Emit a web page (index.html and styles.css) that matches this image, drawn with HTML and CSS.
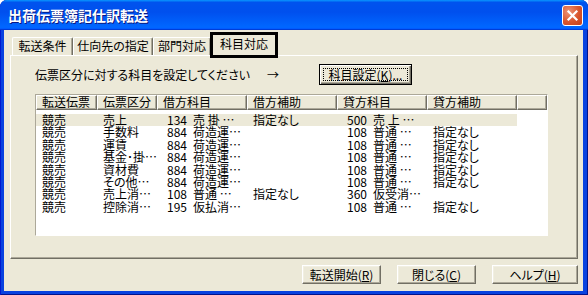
FILE: index.html
```html
<!DOCTYPE html>
<html lang="ja">
<head>
  <meta charset="UTF-8" />
  <title>出荷伝票簿記仕訳転送</title>
  <link rel="stylesheet" href="styles.css">
</head>
<body>
  <!-- Dialog window -->
  <div class="window">
    <div class="titlebar">
      <span class="title">出荷伝票簿記仕訳転送</span>
      <div class="close-btn">
        <svg width="13" height="13" viewBox="0 0 13 13">
          <path d="M2.5 2.5 L10.5 10.5 M10.5 2.5 L2.5 10.5" stroke="#fff" stroke-width="2.2" stroke-linecap="square" fill="none"/>
        </svg>
      </div>
    </div>

    <div class="client">
      <!-- Tabs -->
      <div class="tabs">
        <div class="tab tab-cond">転送条件</div>
        <div class="tab tab-dest">仕向先の指定</div>
        <div class="tab tab-dept">部門対応</div>
        <div class="tab tab-acct active">科目対応</div>
      </div>

      <div class="panel">
        <div class="prompt-row">
          <span class="prompt">伝票区分に対する科目を設定してください</span>
          <span class="arrow">→</span>
          <div class="btn btn-default"><span class="focus-ring">科目設定(<u>K</u>)...</span></div>
        </div>

        <!-- List view -->
        <div class="listview">
          <div class="lv-header">
            <div class="lv-col">転送伝票</div>
            <div class="lv-col">伝票区分</div>
            <div class="lv-col">借方科目</div>
            <div class="lv-col">借方補助</div>
            <div class="lv-col">貸方科目</div>
            <div class="lv-col">貸方補助</div>
            <div class="lv-col lv-filler"></div>
          </div>
          <div class="lv-body">
            <div class="lv-row selected">
              <span>競売</span><span>売上</span>
              <span class="num"><i class="code">134</i>売 掛 …</span><span>指定なし</span>
              <span class="num"><i class="code">500</i>売 上 …</span><span></span>
            </div>
            <div class="lv-row">
              <span>競売</span><span>手数料</span>
              <span class="num"><i class="code">884</i>荷造運…</span><span></span>
              <span class="num"><i class="code">108</i>普通 …</span><span>指定なし</span>
            </div>
            <div class="lv-row">
              <span>競売</span><span>運賃</span>
              <span class="num"><i class="code">884</i>荷造運…</span><span></span>
              <span class="num"><i class="code">108</i>普通 …</span><span>指定なし</span>
            </div>
            <div class="lv-row">
              <span>競売</span><span>基金･掛…</span>
              <span class="num"><i class="code">884</i>荷造運…</span><span></span>
              <span class="num"><i class="code">108</i>普通 …</span><span>指定なし</span>
            </div>
            <div class="lv-row">
              <span>競売</span><span>資材費</span>
              <span class="num"><i class="code">884</i>荷造運…</span><span></span>
              <span class="num"><i class="code">108</i>普通 …</span><span>指定なし</span>
            </div>
            <div class="lv-row">
              <span>競売</span><span>その他…</span>
              <span class="num"><i class="code">884</i>荷造運…</span><span></span>
              <span class="num"><i class="code">108</i>普通 …</span><span>指定なし</span>
            </div>
            <div class="lv-row">
              <span>競売</span><span>売上消…</span>
              <span class="num"><i class="code">108</i>普通 …</span><span>指定なし</span>
              <span class="num"><i class="code">360</i>仮受消…</span><span></span>
            </div>
            <div class="lv-row">
              <span>競売</span><span>控除消…</span>
              <span class="num"><i class="code">195</i>仮払消…</span><span></span>
              <span class="num"><i class="code">108</i>普通 …</span><span>指定なし</span>
            </div>
          </div>
        </div>
      </div>

      <!-- Dialog buttons -->
      <div class="actions">
        <div class="btn btn-start">転送開始(<u>R</u>)</div>
        <div class="btn btn-close">閉じる(<u>C</u>)</div>
        <div class="btn btn-help">ヘルプ(<u>H</u>)</div>
      </div>
    </div>
  </div>
</body>
</html>
```

FILE: styles.css
```css
/* General */
* {
  box-sizing: border-box;
}

body {
  margin: 0;
  font-family: "Noto Sans CJK JP", "Noto Sans", sans-serif;
  font-size: 12px;
  font-feature-settings: "palt";
  color: #000;
  background: #fff;
}

/* Window frame */
.window {
  width: 588px;
  height: 295px;
  display: flex;
  flex-direction: column;
  background: #0842e0;
  border-radius: 7px 7px 0 0;
  box-shadow: inset 1px 0 #0019cf, inset -1px 0 #00138c, inset 0 -1px #00138c;
  overflow: hidden;
}

.titlebar {
  height: 30px;
  flex: none;
  display: flex;
  align-items: center;
  justify-content: space-between;
  padding: 0 5px 0 8px;
  background: linear-gradient(180deg, #0997ff, #0053ee 8%, #0050ee 40%, #06f 88%, #06f 93%, #005bff 95%, #003dd7 96%, #003dd7);
}

.title {
  color: #fff;
  font-weight: bold;
  font-size: 14px;
  text-shadow: 1px 1px #0a1883;
}

.close-btn {
  width: 21px;
  height: 21px;
  border: 1px solid #fff;
  border-radius: 3px;
  background: radial-gradient(circle at 30% 30%, #ec9478, #d9552c 55%, #c5401b);
  display: flex;
  align-items: center;
  justify-content: center;
}

/* Client area */
.client {
  flex: 1;
  margin: 0 5px 4px 4px;
  padding: 3px 5px 7px 6px;
  background: #ece9d8;
  display: flex;
  flex-direction: column;
}

/* Tabs */
.tabs {
  display: flex;
  align-items: flex-end;
  height: 22px;
  padding-left: 2px;
  position: relative;
  z-index: 1;
}

.tab {
  height: 18px;
  line-height: 15px;
  text-align: center;
  white-space: nowrap;
  background: #ece9d8;
  border: 1px solid #fff;
  border-bottom: none;
  border-right-color: #716f64;
  border-radius: 2px 2px 0 0;
  box-shadow: inset -1px 0 #aca899;
}
.tab-cond { width: 61px; }
.tab-dest { width: 80px; }
.tab-dept { width: 58px; }
.tab-acct { width: 66px; }

.tab.active {
  height: 23px;
  line-height: 19px;
  margin-bottom: -1px;
  position: relative;
}

/* black marker drawn round the current tab */
.tab.active::after {
  content: "";
  position: absolute;
  top: -2px;
  left: -2px;
  right: -2px;
  bottom: -2px;
  border: 3px solid #000;
}

/* Tab page */
.panel {
  height: 204px;
  flex: none;
  padding: 8px 0 0 24px;
  border: 1px solid;
  border-color: #fff #716f64 #716f64 #fff;
  box-shadow: inset -1px -1px #aca899;
}

.prompt-row {
  display: flex;
  align-items: center;
  height: 21px;
}
.prompt {
  width: 232px;
  white-space: nowrap;
}
.arrow {
  width: 52px;
}

/* Buttons */
.btn {
  height: 19px;
  display: flex;
  align-items: center;
  justify-content: center;
  white-space: nowrap;
  background: #ece9d8;
  border: 1px solid;
  border-color: #fff #716f64 #716f64 #fff;
  box-shadow: inset -1px -1px #aca899, inset 1px 1px #f1efe2;
}
.btn u {
  text-underline-offset: 1px;
}

.btn-default {
  width: 93px;
  height: 21px;
  border: 1px solid #000;
  box-shadow: inset 1px 1px #fff, inset -1px -1px #716f64, inset -2px -2px #aca899;
}
.focus-ring {
  width: 85px;
  height: 13px;
  display: flex;
  align-items: center;
  justify-content: center;
  border: 1px dotted #000;
}

.actions {
  display: flex;
  justify-content: flex-end;
  gap: 16px;
  margin-top: 6px;
}
.btn-start { width: 79px; }
.btn-close { width: 79px; }
.btn-help { width: 86px; }

/* List view */
.listview {
  width: 513px;
  height: 142px;
  margin-top: 9px;
  background: #fff;
  border: 1px solid;
  border-color: #aca899 #fff #fff #aca899;
}

.lv-header {
  display: flex;
  height: 15px;
}
.lv-col {
  flex: none;
  padding-left: 5px;
  line-height: 12px;
  white-space: nowrap;
  background: #ece9d8;
  border: 1px solid;
  border-color: #fff #716f64 #716f64 #fff;
  box-shadow: inset -1px -1px #aca899;
}
.lv-col:nth-child(1) { width: 61px; }
.lv-col:nth-child(2) { width: 60px; }
.lv-col:nth-child(3),
.lv-col:nth-child(4),
.lv-col:nth-child(5),
.lv-col:nth-child(6) { width: 90px; }
.lv-filler { flex: 1; }

.lv-body {
  padding-top: 4px;
}
.lv-row {
  display: grid;
  grid-template-columns: 61px 60px 90px 90px 90px 90px;
  width: 481px;
  height: 12.4px;
  line-height: 12px;
  white-space: nowrap;
}
.lv-row.selected {
  background: #ece9d8;
}
.lv-row span {
  padding-left: 6px;
}
.lv-row span.num {
  padding-left: 10px;
}
.code {
  display: inline-block;
  width: 26px;
  font-style: normal;
}
```
